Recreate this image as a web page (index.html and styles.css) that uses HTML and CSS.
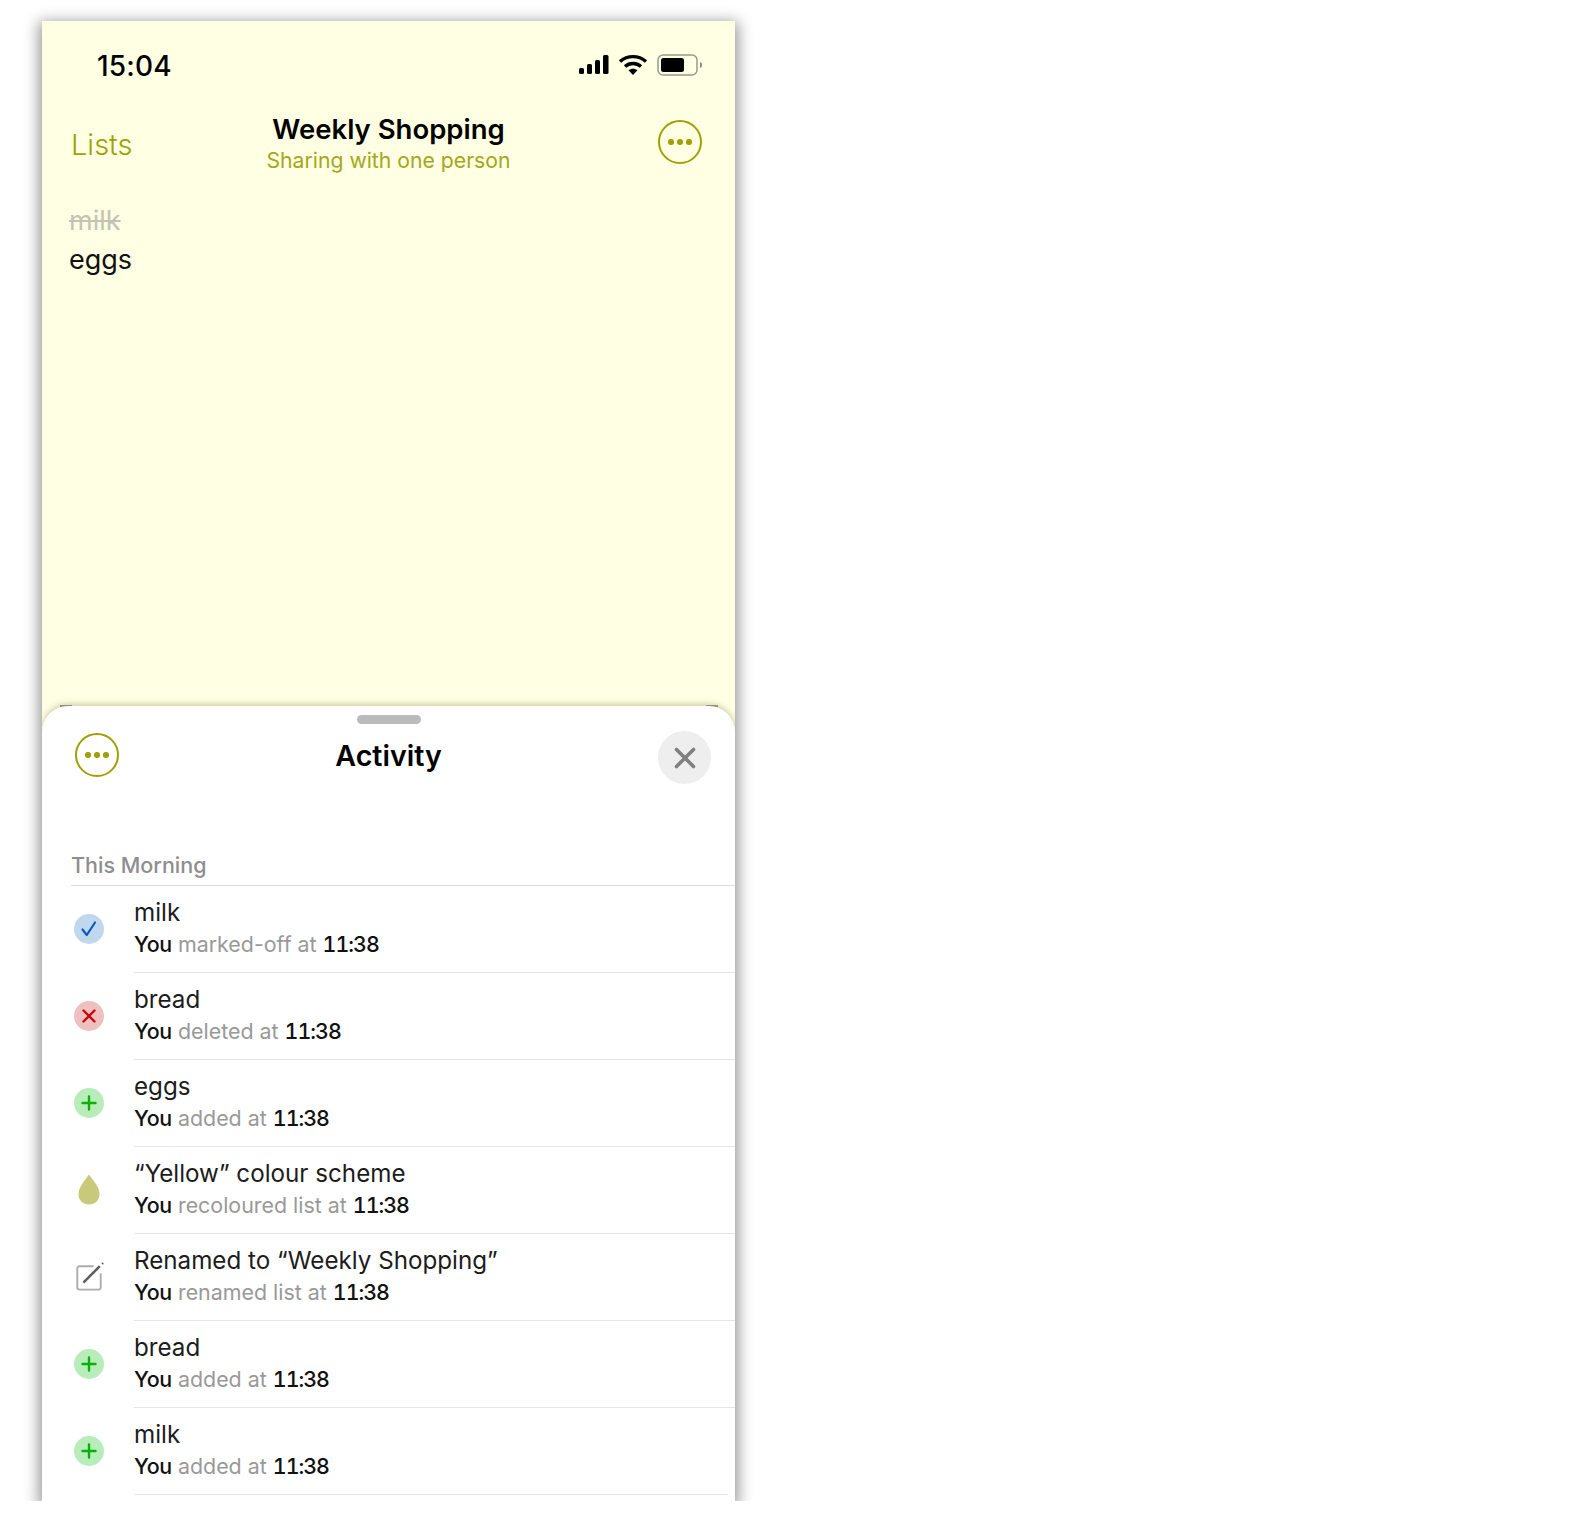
FILE: index.html
```html
<!DOCTYPE html>
<html lang="en">
<head>
    <meta charset="UTF-8">
    <meta name="viewport" content="width=device-width, initial-scale=1.0">
    <title>Weekly Shopping</title>
    <link rel="stylesheet" href="styles.css">
</head>
<body>
    <div class="phone">
        <div class="status-bar">
            <span class="time">15:04</span>
            <div class="status-icons">
                <svg width="30" height="20" viewBox="0 0 30 20"><rect x="0" y="13" width="5" height="6" rx="1.5"/><rect x="8" y="9" width="5" height="10" rx="1.5"/><rect x="16" y="5" width="5" height="14" rx="1.5"/><rect x="24" y="0" width="5.5" height="19" rx="1.5"/></svg>
                <svg width="30" height="22" viewBox="0 0 30 22" fill="none" stroke="#000" stroke-width="3.4"><path d="M2 7.5C9.500 1 20.500 1 28 7.500"/><path d="M7 12.500C11.500 8.500 18.500 8.500 23 12.500"/><path d="M15 21l-4.500-4.700C13 14.200 17 14.200 19.500 16.300z" fill="#000" stroke="none"/></svg>
                <svg width="46" height="22" viewBox="0 0 46 22"><rect x="1" y="1" width="39" height="20" rx="5" fill="none" stroke="#9a9a8c" stroke-width="1.500"/><rect x="4" y="4" width="23" height="14" rx="2.500"/><path d="M43 8c1.500.5 2 1.500 2 3s-.5 2.500-2 3z" fill="#8a8a80"/></svg>
            </div>
        </div>

        <div class="nav-bar">
            <a class="back-link">Lists</a>
            <div class="nav-title">
                <h1>Weekly Shopping</h1>
                <p>Sharing with one person</p>
            </div>
            <div class="nav-action">
                <span class="more-btn"><i></i><i></i><i></i></span>
            </div>
        </div>

        <ul class="items">
            <li class="done">milk</li>
            <li>eggs</li>
        </ul>

        <div class="sheet">
            <div class="handle"></div>
            <div class="sheet-head">
                <div class="sheet-more"><span class="more-btn"><i></i><i></i><i></i></span></div>
                <h2>Activity</h2>
                <div class="sheet-close">
                    <span class="close-btn">
                        <svg width="24" height="24" viewBox="0 0 24 24" fill="none" stroke="#808080" stroke-width="3.600" stroke-linecap="round"><path d="M3.500 3.500l17 17M20.500 3.500l-17 17"/></svg>
                    </span>
                </div>
            </div>

            <div class="section-label">This Morning</div>

            <div class="row">
                <span class="badge badge-blue">
                    <svg width="20" height="20" viewBox="0 0 20 20" fill="none" stroke="#0a5cb8" stroke-width="2.200" stroke-linecap="round" stroke-linejoin="round"><path d="M3.500 10.500l4.300 5.500L16 3.500"/></svg>
                </span>
                <div class="row-text">
                    <div class="row-title">milk</div>
                    <div class="row-sub"><b>You</b> marked-off at <time>11:38</time></div>
                </div>
            </div>

            <div class="row">
                <span class="badge badge-red">
                    <svg width="20" height="20" viewBox="0 0 20 20" fill="none" stroke="#c40a0a" stroke-width="2.400" stroke-linecap="round"><path d="M4.500 4.500l11 11M15.500 4.500l-11 11"/></svg>
                </span>
                <div class="row-text">
                    <div class="row-title">bread</div>
                    <div class="row-sub"><b>You</b> deleted at <time>11:38</time></div>
                </div>
            </div>

            <div class="row">
                <span class="badge badge-green">
                    <svg width="20" height="20" viewBox="0 0 20 20" fill="none" stroke="#0ab00a" stroke-width="2.400" stroke-linecap="round"><path d="M10 3.500v13M3.500 10h13"/></svg>
                </span>
                <div class="row-text">
                    <div class="row-title">eggs</div>
                    <div class="row-sub"><b>You</b> added at <time>11:38</time></div>
                </div>
            </div>

            <div class="row">
                <span class="badge">
                    <svg width="22" height="31" viewBox="0 0 22 31"><path d="M11 0.500C8 5 0.500 12.500 0.500 20.200C0.500 26.500 5.200 30.500 11 30.500C16.800 30.500 21.500 26.500 21.500 20.200C21.500 12.500 14 5 11 0.500z" fill="#c9c97c"/></svg>
                </span>
                <div class="row-text">
                    <div class="row-title">“Yellow” colour scheme</div>
                    <div class="row-sub"><b>You</b> recoloured list at <time>11:38</time></div>
                </div>
            </div>

            <div class="row">
                <span class="badge">
                    <svg width="32" height="32" viewBox="0 0 32 32" fill="none"><path d="M21 4.500H6A2.500 2.500 0 0 0 3.500 7v20A2.500 2.500 0 0 0 6 29.500h20a2.500 2.500 0 0 0 2.500-2.500V12" stroke="#adadad" stroke-width="2"/><path d="M10 22L27.500 4.500" stroke="#5c5c5c" stroke-width="2.600"/><path d="M30 2l1-1" stroke="#5c5c5c" stroke-width="2.400"/></svg>
                </span>
                <div class="row-text">
                    <div class="row-title">Renamed to “Weekly Shopping”</div>
                    <div class="row-sub"><b>You</b> renamed list at <time>11:38</time></div>
                </div>
            </div>

            <div class="row">
                <span class="badge badge-green">
                    <svg width="20" height="20" viewBox="0 0 20 20" fill="none" stroke="#0ab00a" stroke-width="2.400" stroke-linecap="round"><path d="M10 3.500v13M3.500 10h13"/></svg>
                </span>
                <div class="row-text">
                    <div class="row-title">bread</div>
                    <div class="row-sub"><b>You</b> added at <time>11:38</time></div>
                </div>
            </div>

            <div class="row row-last">
                <span class="badge badge-green">
                    <svg width="20" height="20" viewBox="0 0 20 20" fill="none" stroke="#0ab00a" stroke-width="2.400" stroke-linecap="round"><path d="M10 3.500v13M3.500 10h13"/></svg>
                </span>
                <div class="row-text">
                    <div class="row-title">milk</div>
                    <div class="row-sub"><b>You</b> added at <time>11:38</time></div>
                </div>
            </div>
        </div>
    </div>
</body>
</html>
```

FILE: styles.css
```css
* {
    box-sizing: border-box;
}

body {
    margin: 0;
    padding: 0;
    background-color: #fff;
    font-family: Inter, "Liberation Sans", sans-serif;
    color: #111;
}

.phone {
    position: relative;
    z-index: 0;
    width: 693px;
    height: 1480px;
    margin: 21px 0 0 42px;
    background-color: #ffffe3;
    box-shadow: 0 4px 14px 3px rgba(0, 0, 0, 0.42);
    display: flex;
    flex-direction: column;
    overflow: hidden;
}

.status-bar {
    height: 66px;
    padding: 23px 32px 0 55px;
    display: flex;
    justify-content: space-between;
    align-items: center;
    flex-shrink: 0;
}

.time {
    font-size: 28px;
    font-weight: 500;
    letter-spacing: 0.2px;
    color: #000;
}

.status-icons {
    display: flex;
    align-items: center;
    gap: 9px;
    margin-bottom: 2px;
}

.nav-bar {
    height: 76px;
    padding: 25px 33px 0;
    display: grid;
    grid-template-columns: 1fr auto 1fr;
    flex-shrink: 0;
}

.back-link {
    font-size: 29px;
    font-weight: 300;
    color: #9ca300;
    margin: 15px 0 0 -4px;
}

.nav-title {
    text-align: center;
}

.nav-title h1 {
    margin: 0;
    font-size: 27.500px;
    line-height: 34px;
    font-weight: 600;
    color: #000;
}

.nav-title p {
    margin: 1px 0 0;
    font-size: 21.200px;
    line-height: 27px;
    font-weight: 400;
    color: #a3a81a;
}

.nav-action {
    display: flex;
    justify-content: flex-end;
    padding-top: 8px;
}

.more-btn {
    width: 44px;
    height: 44px;
    border: 2.500px solid #a0a000;
    border-radius: 50%;
    display: inline-flex;
    align-items: center;
    justify-content: center;
    gap: 3.500px;
}

.more-btn i {
    width: 5.500px;
    height: 5.500px;
    border-radius: 50%;
    background-color: #a0a000;
}

.items {
    list-style: none;
    margin: 0;
    padding: 38px 0 0 27px;
    flex: 1;
    font-size: 27px;
    line-height: 39px;
    font-weight: 400;
    color: #111;
}

.items .done {
    color: #c4c4b6;
    text-decoration: line-through;
}

.sheet {
    position: relative;
    height: 795px;
    flex-shrink: 0;
    background-color: #fff;
    border-radius: 26px 26px 0 0;
    box-shadow: 0 -2px 6px rgba(90, 90, 40, 0.3);
}

/* the little dashes that peek out at the sheet's top corners */
.sheet::before,
.sheet::after {
    content: "";
    position: absolute;
    top: -1px;
    width: 12px;
    height: 2px;
    background-color: #a0a094;
    z-index: -1;
}

.sheet::before {
    left: 18px;
}

.sheet::after {
    right: 17px;
}

.handle {
    width: 64px;
    height: 9px;
    margin: 9px auto 0;
    border-radius: 5px;
    background-color: #bbb;
}

.sheet-head {
    height: 65px;
    padding: 0 23px;
    display: grid;
    grid-template-columns: 1fr auto 1fr;
}

.sheet-more {
    padding: 9px 0 0 10px;
}

.sheet-head h2 {
    margin: 8px 0 0;
    font-size: 28.600px;
    line-height: 48px;
    font-weight: 600;
    color: #000;
}

.sheet-close {
    display: flex;
    justify-content: flex-end;
    padding: 7px 1px 0 0;
}

.close-btn {
    width: 53px;
    height: 53px;
    border-radius: 50%;
    background-color: #eee;
    display: inline-flex;
    align-items: center;
    justify-content: center;
}

.section-label {
    margin: 54px 0 0 29px;
    height: 43px;
    padding-top: 9px;
    font-size: 21.500px;
    line-height: 26px;
    font-weight: 500;
    color: #8e8e8e;
    border-bottom: 1.500px solid #ddd;
}

.row {
    height: 87px;
    padding-left: 32px;
    display: flex;
    align-items: center;
}

.badge {
    width: 30px;
    height: 30px;
    margin-bottom: 2px;
    border-radius: 50%;
    display: flex;
    align-items: center;
    justify-content: center;
    flex-shrink: 0;
}

.badge-blue {
    background-color: #c0d8ee;
}

.badge-red {
    background-color: #eec0c0;
}

.badge-green {
    background-color: #b8ecb8;
}

.row-text {
    flex: 1;
    height: 100%;
    margin-left: 30px;
    padding-top: 11px;
    border-bottom: 1.500px solid #e6e6e6;
}

.row-title {
    font-size: 24.200px;
    line-height: 32px;
    font-weight: 400;
    color: #1c1c1c;
}

.row-sub {
    margin-top: 2px;
    font-size: 21.400px;
    line-height: 26px;
    font-weight: 400;
    color: #999;
}

.row-sub b,
.row-sub time {
    font-weight: 550;
    color: #111;
}

.row-sub b {
    letter-spacing: -0.3px;
}

.row-sub time {
    font-variant-numeric: tabular-nums;
    letter-spacing: -1px;
}

.row-last .row-text {
    margin-right: 7px;
}
```
